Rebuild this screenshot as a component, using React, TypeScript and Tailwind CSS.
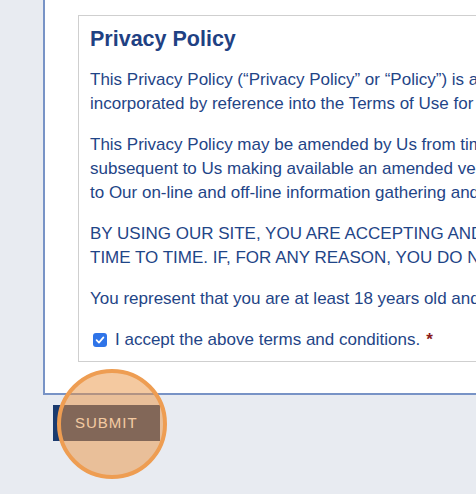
import React from "react";

const lines = {
  p1: [
    "This Privacy Policy (“Privacy Policy” or “Policy”) is an integral part of the Terms of Use and is",
    "incorporated by reference into the Terms of Use for this website and all related services.",
  ],
  p2: [
    "This Privacy Policy may be amended by Us from time to time and your continued use of the Site",
    "subsequent to Us making available an amended version of this Policy shall constitute acceptance",
    "to Our on-line and off-line information gathering and use practices as described herein.",
  ],
  p3: [
    "BY USING OUR SITE, YOU ARE ACCEPTING AND AGREEING TO THIS POLICY AS AMENDED FROM",
    "TIME TO TIME. IF, FOR ANY REASON, YOU DO NOT AGREE, PLEASE DO NOT USE OUR SITE.",
  ],
  p4: ["You represent that you are at least 18 years old and able to enter into this agreement."],
};

function Para({ items, className }: { items: string[]; className: string }) {
  return (
    <p className={"whitespace-nowrap text-[17px] leading-[24px] " + className}>
      {items.map((t, i) => (
        <React.Fragment key={i}>
          {t}
          {i < items.length - 1 && <br />}
        </React.Fragment>
      ))}
    </p>
  );
}

export default function App() {
  return (
    <div
      className="relative w-[476px] h-[494px] overflow-hidden bg-[#e8ebf1] text-[#1f4587]"
      style={{ fontFamily: '"Liberation Sans", Arial, sans-serif' }}
    >
      <div className="ml-[43px] w-[700px] bg-white border-l-2 border-b-2 border-[#7893c6] pl-[33px] pt-[15px] pb-[31px]">
        <div className="w-[800px] border border-[#cfcfcf] pl-[11px] pt-[10px] pb-[9px]">
          <h2 className="text-[21.5px] leading-[26px] font-bold text-[#1f4183]">Privacy Policy</h2>
          <Para items={lines.p1} className="mt-[16px]" />
          <Para items={lines.p2} className="mt-[17px]" />
          <Para items={lines.p3} className="mt-[17px]" />
          <Para items={lines.p4} className="mt-[17px]" />
          <label className="mt-[17px] flex items-center h-[24px] whitespace-nowrap text-[17px] leading-[24px]">
            <span className="ml-[3px] mr-[8px] flex h-[14px] w-[14px] items-center justify-center rounded-[3px] bg-[#2f74e8]">
              <svg viewBox="0 0 14 14" className="h-[12px] w-[12px]">
                <path d="M3 7.2 L5.8 10 L11 4" fill="none" stroke="white" strokeWidth="2" strokeLinecap="round" strokeLinejoin="round" />
              </svg>
            </span>
            I accept the above terms and conditions.
            <span className="ml-[6px] font-bold text-[#8b1c1c]">*</span>
          </label>
        </div>
      </div>
      <button className="mt-[10px] ml-[53px] h-[36px] bg-[#1b3b6f] px-[22px] text-[15px] tracking-[1px] text-white">
        SUBMIT
      </button>
      <div className="absolute left-[57px] top-[369px] h-[110px] w-[110px] rounded-full border-[4px] border-[#ee9d52] bg-[rgba(233,148,65,0.5)]" />
    </div>
  );
}
